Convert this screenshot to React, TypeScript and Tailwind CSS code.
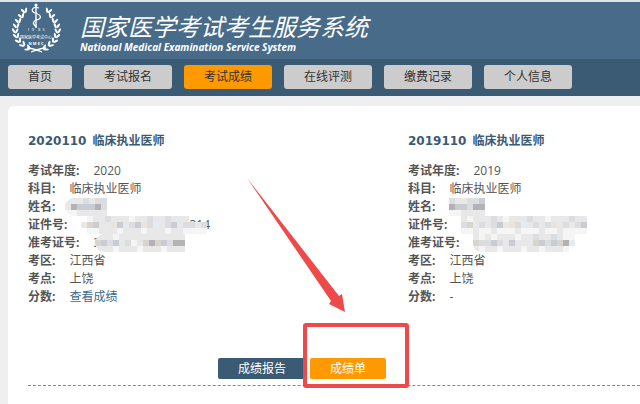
import type { ReactNode } from 'react';

const navItems = [
  { name: '首页', active: false },
  { name: '考试报名', active: false },
  { name: '考试成绩', active: true },
  { name: '在线评测', active: false },
  { name: '缴费记录', active: false },
  { name: '个人信息', active: false },
];

const shades: Record<string, string> = {
  a: '#f5f5f5',
  b: '#e8e8e8',
  c: '#dcdde0',
  d: '#c9ccd3',
  e: '#b4b2b4',
  f: '#ece3dc',
  g: '#e4ecf2',
  h: '#d8d4ce',
};

// Each letter is one 6px cell, a dot leaves the cell empty
function Mosaic({ rows }: { rows: string[] }) {
  const width = rows[0].length * 6;
  const height = rows.length * 6;
  return (
    <svg role="img" aria-label="已隐藏" width={width} height={height} viewBox={`0 0 ${width} ${height}`} shapeRendering="crispEdges">
      {rows.map((row, y) =>
        row.split('').map((cell, x) =>
          cell === '.' ? null : <rect key={`${x}-${y}`} x={x * 6} y={y * 6} width={6} height={6} fill={shades[cell]} />
        )
      )}
    </svg>
  );
}

function Field({ label, children }: { label: string; children: ReactNode }) {
  return (
    <div className="flex h-[18px] items-center">
      <dt className="mr-3.5 font-bold">{label}:</dt>
      <dd className="relative flex items-center">{children}</dd>
    </div>
  );
}

function ExamTitle({ code, name }: { code: string; name: string }) {
  return (
    <h2 className="mb-3 flex h-[18px] items-center gap-1.5 font-bold text-[#3b5a73]">
      <span className="font-['DejaVu_Sans',sans-serif]">{code}</span>
      <span>{name}</span>
    </h2>
  );
}

function Laurel() {
  const leaves = [
    [12, 8, -22], [9, 13, -18], [6, 18, -14], [4, 23, -8], [3, 28, 0], [4, 33, -18], [6, 38, -32], [10, 42, -48], [15, 46, -62],
  ];
  return (
    <g>
      {leaves.map(([x, y, r]) => (
        <g key={y} transform={`translate(${x} ${y}) rotate(${r})`}>
          <ellipse cx="-1.5" cy="0" rx="1.1" ry="2.8" transform="rotate(-28)" />
          <ellipse cx="2" cy="0" rx="1.1" ry="2.8" transform="rotate(30)" />
        </g>
      ))}
      <path d="M15 46Q20 46 30 50" fill="none" stroke="white" strokeWidth="1.3" />
    </g>
  );
}

function Logo() {
  return (
    <svg className="h-[52px] w-[50px] shrink-0" viewBox="0 0 50 52" fill="white" aria-hidden="true">
      <Laurel />
      <g transform="translate(49 0) scale(-1 1)">
        <Laurel />
      </g>
      <circle cx="24" cy="3" r="1.6" />
      <path d="M24 3V26" stroke="white" strokeWidth="1.4" />
      <path d="M27 6C20 4 18 9 23 11C30 13 30 17 24 18C20 20 21 23 25 25" fill="none" stroke="white" strokeWidth="1.3" />
      <text x="24" y="29" textAnchor="middle" fontSize="4" xmlSpace="preserve">1  9    8  5</text>
      <text x="24" y="37" textAnchor="middle" fontSize="4">国家医学考试中心</text>
      <text x="24" y="43" textAnchor="middle" fontSize="4" fontWeight="bold">N M E C</text>
    </svg>
  );
}

export default function App() {
  return (
    <div className="min-h-screen overflow-hidden bg-[#efefef] font-['Open_Sans','Noto_Sans_CJK_SC',sans-serif] text-xs text-[#555]">
      <header className="border-t-2 border-[#dfe4e9] bg-[#476b88]">
        <div className="flex h-[57px] items-start px-3 text-white">
          <Logo />
          <div className="ml-[18px] pt-[13px] italic">
            <h1 className="font-['Liberation_Sans','Noto_Sans_CJK_SC',sans-serif] text-2xl leading-[26px]">国家医学考试考生服务系统</h1>
            <p className="font-['Noto_Sans',sans-serif] text-[10px] font-bold leading-3">National Medical Examination Service System</p>
          </div>
        </div>
        <nav className="flex h-[37px] gap-3 bg-[#3b5a73] px-2 pt-1.5">
          {navItems.map((item) => (
            <a
              key={item.name}
              href="#"
              className={`h-6 rounded-[3px] px-5 leading-6 text-[#333] ${item.active ? 'bg-[#ff9900]' : 'bg-[#cccccc]'}`}
            >
              {item.name}
            </a>
          ))}
        </nav>
      </header>

      <main className="ml-2 mt-2.5 min-h-[298px] rounded-tl-md bg-white pl-5 pt-[26px]">
        <div className="grid grid-cols-[380px_1fr]">
          <section>
            <ExamTitle code="2020110" name="临床执业医师" />
            <dl>
              <Field label="考试年度">2020</Field>
              <Field label="科目">临床执业医师</Field>
              <Field label="姓名">
                <span className="-ml-1 overflow-hidden rounded-l-full">
                  <Mosaic rows={['bbbcbcc', 'bedddec', 'aabbbbb']} />
                </span>
              </Field>
              <Field label="证件号">
                <span className="pl-[108px]">314</span>
                <span className="absolute left-0 overflow-hidden rounded-l-full">
                  <Mosaic rows={['.abbcbbbabbcbbcbbb...', 'bhdbbfdbcdfcgbcdbccbc', '.aabbbabbbabbbabbaaaa']} />
                </span>
              </Field>
              <Field label="准考证号">
                <span>3</span>
                <span className="absolute left-0.5 overflow-hidden rounded-l-full">
                  <Mosaic rows={['bbbabbbbbbbbbbb', 'hdcdbcabhehdcee', 'bbbabbbabbbabbb']} />
                </span>
              </Field>
              <Field label="考区">江西省</Field>
              <Field label="考点">上饶</Field>
              <Field label="分数"><a href="#" className="text-[#3b6a8f]">查看成绩</a></Field>
            </dl>
          </section>
          <section>
            <ExamTitle code="2019110" name="临床执业医师" />
            <dl>
              <Field label="考试年度">2019</Field>
              <Field label="科目">临床执业医师</Field>
              <Field label="姓名"><Mosaic rows={['cbbccd', 'eddcee', 'aabbbb']} /></Field>
              <Field label="证件号"><Mosaic rows={['babbbcbabbbcbbabbbcbb', 'chbcbcdbfcgbcbcfbcbcd', 'aabaabaaabaaabaabaaaa']} /></Field>
              <Field label="准考证号">
                <span className="overflow-hidden rounded-bl-lg">
                  <Mosaic rows={['bababbbabbcbbcbaa', 'hccdcbdbbbhdcdheg', 'babbabbbabbabbba.']} />
                </span>
              </Field>
              <Field label="考区">江西省</Field>
              <Field label="考点">上饶</Field>
              <Field label="分数">-</Field>
            </dl>
          </section>
        </div>
        <div className="mt-[52px] flex gap-1 border-b border-dashed border-[#888] pb-1.5 pl-[190px] text-white">
          <button type="button" className="h-[21px] rounded-[2px] bg-[#3b5a73] px-5">成绩报告</button>
          <div className="relative">
            <button type="button" className="h-[21px] rounded-[2px] bg-[#ff9900] px-5">成绩单</button>
            {/* Callout frame and arrow */}
            <svg className="pointer-events-none absolute -left-[70px] -top-[184px] h-[216px] w-[176px]" viewBox="0 0 176 216" aria-hidden="true">
              <path d="M7 4L99 122L102 120L105 138L89 130L91 127Z" fill="#ef4a4a" />
              <rect x="65" y="151" width="102" height="61" rx="1" fill="none" stroke="#ef4a4a" strokeWidth="4" />
            </svg>
          </div>
        </div>
      </main>
    </div>
  );
}
